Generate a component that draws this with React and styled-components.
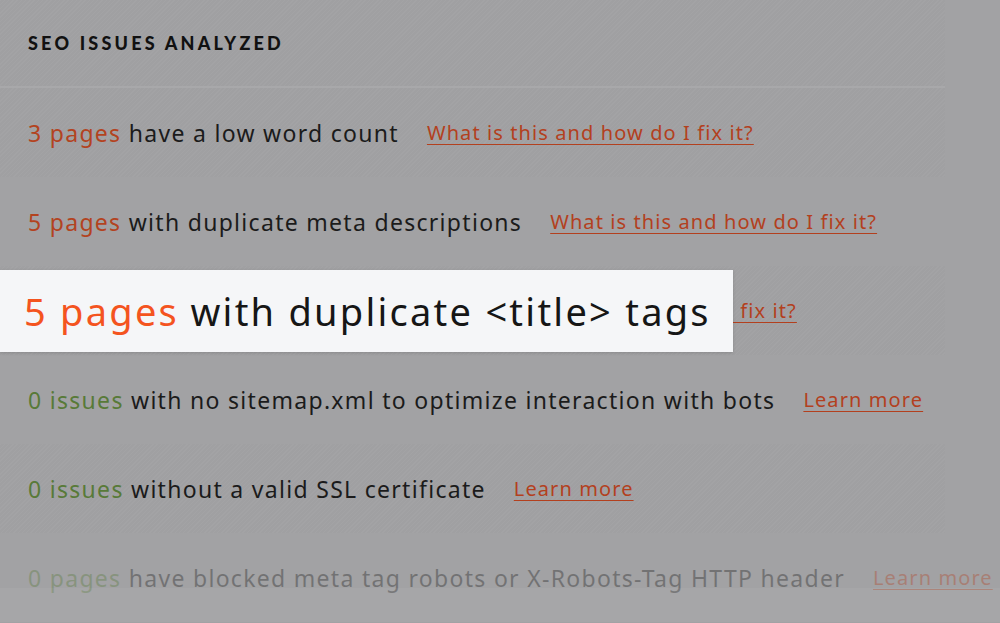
import React from "react";
import styled, { createGlobalStyle, css } from "styled-components";

const GlobalStyle = createGlobalStyle`
  html, body {
    margin: 0;
    padding: 0;
    background: #a2a2a4;
  }
  body {
    font-family: "Noto Sans", "Lato", sans-serif;
  }
`;

const rows = [
  { count: "3 pages", tone: "bad", text: "have a low word count", link: "What is this and how do I fix it?" },
  { count: "5 pages", tone: "bad", text: "with duplicate meta descriptions", link: "What is this and how do I fix it?" },
  { count: "5 pages", tone: "bad", text: "with duplicate <title> tags", link: "What is this and how do I fix it?" },
  { count: "0 issues", tone: "good", text: "with no sitemap.xml to optimize interaction with bots", link: "Learn more" },
  { count: "0 issues", tone: "good", text: "without a valid SSL certificate", link: "Learn more" },
  { count: "0 pages", tone: "good", text: "have blocked meta tag robots or X-Robots-Tag HTTP header", link: "Learn more", faded: true },
];

export default function App() {
  return (
    <>
      <GlobalStyle />
      <Page>
        <Header>
          <Heading>SEO Issues Analyzed</Heading>
        </Header>
        <List>
          {rows.map((row, i) => (
            <Row key={i} striped={i % 2 === 0} faded={row.faded}>
              <Sentence>
                <Count tone={row.tone}>{row.count}</Count> {row.text}
              </Sentence>
              <Link href="#">{row.link}</Link>
            </Row>
          ))}
        </List>
        <Callout>
          <CalloutCount>5 pages</CalloutCount> with duplicate &lt;title&gt; tags
        </Callout>
      </Page>
    </>
  );
}

const hatch = css`
  background-color: #a0a0a2;
  background-image: repeating-linear-gradient(
    135deg,
    rgba(255, 255, 255, 0.035) 0px,
    rgba(255, 255, 255, 0.035) 1px,
    transparent 1px,
    transparent 3px
  );
`;

const Page = styled.div`
  position: relative;
  width: 1000px;
  height: 623px;
  overflow: hidden;
  background: #a2a2a4;
`;

const Header = styled.div`
  width: 945px;
  height: 88px;
  padding-left: 28px;
  box-sizing: border-box;
  display: flex;
  align-items: center;
  border-bottom: 2px solid #a8a8aa;
  ${hatch};
`;

const Heading = styled.h2`
  margin: 0;
  font-family: "Lato", sans-serif;
  font-size: 18px;
  font-weight: 900;
  letter-spacing: 3.2px;
  text-transform: uppercase;
  color: #111;
`;

const List = styled.div`
  display: flex;
  flex-direction: column;
`;

const Row = styled.div`
  position: relative;
  height: 89px;
  width: ${(p) => (p.striped ? "945px" : "1000px")};
  box-sizing: border-box;
  padding-left: 28px;
  display: flex;
  align-items: center;
  gap: 28px;
  white-space: nowrap;
  ${(p) => p.striped && hatch};
  ${(p) =>
    p.faded &&
    css`
      width: 1000px;
      & > * {
        opacity: 0.35;
      }
      &::after {
        content: "";
        position: absolute;
        left: 0;
        right: 0;
        top: 55px;
        bottom: 0;
        background: rgba(255, 255, 255, 0.05);
      }
    `}
`;

const Sentence = styled.span`
  font-size: 23px;
  letter-spacing: 1.3px;
  color: #1b1b1b;
`;

const Count = styled.span`
  color: ${(p) => (p.tone === "good" ? "#587a38" : "#b3431f")};
`;

const Link = styled.a`
  font-size: 20px;
  letter-spacing: 1.1px;
  color: #b3401e;
  text-decoration: underline;
  text-underline-offset: 4px;
  text-decoration-thickness: 1px;
`;

const Callout = styled.div`
  position: absolute;
  left: 0;
  top: 270px;
  width: 733px;
  height: 82px;
  box-sizing: border-box;
  padding-left: 24px;
  display: flex;
  align-items: center;
  background: #f5f6f8;
  box-shadow: 0 1px 3px rgba(0, 0, 0, 0.15);
  font-size: 38px;
  letter-spacing: 2.25px;
  color: #161616;
  white-space: nowrap;
`;

const CalloutCount = styled.span`
  color: #f4541f;
  margin-right: 0.3em;
`;
